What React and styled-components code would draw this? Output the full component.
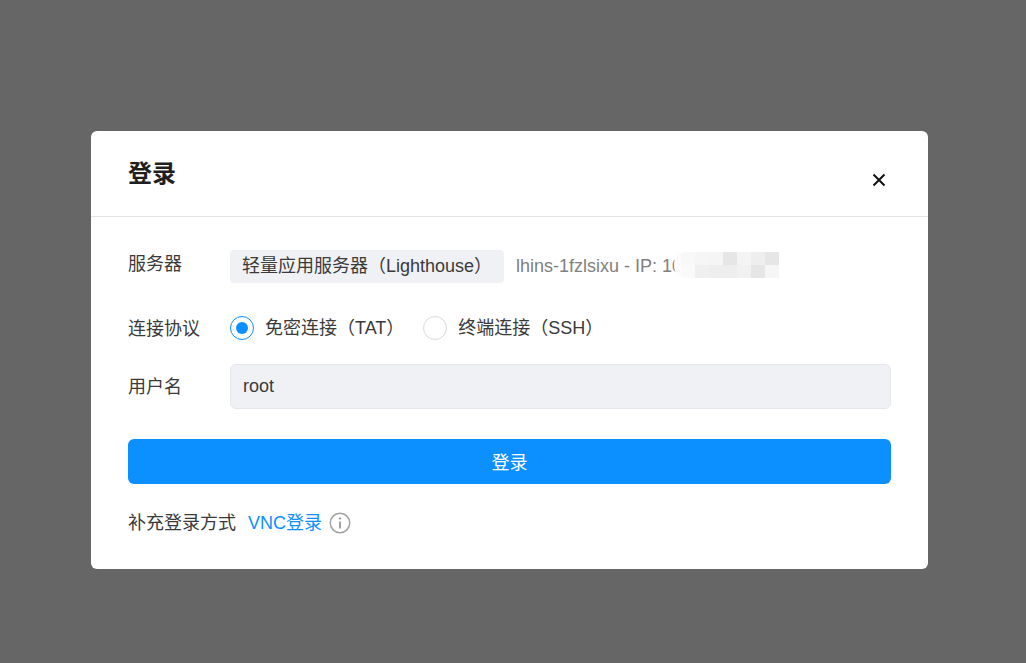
import React from 'react'
import styled, { createGlobalStyle } from 'styled-components'

const GlobalStyle = createGlobalStyle`
	html, body {
		margin: 0;
		padding: 0;
		height: 100%;
		background: #666666;
	}
	* {
		box-sizing: border-box;
	}
`

const Overlay = styled.div`
	width: 1026px;
	height: 663px;
	padding: 131px 0 0 91px;
	background: #666666;
	overflow: hidden;
	font-family: 'Liberation Sans', 'Noto Sans CJK SC', sans-serif;
`

const Modal = styled.div`
	width: 837px;
	height: 438px;
	background: #fff;
	border-radius: 6px;
`

const Header = styled.div`
	display: flex;
	justify-content: space-between;
	height: 86px;
	padding: 26px 41px 0 37px;
	border-bottom: 1px solid #e3e3e6;
`

const Title = styled.h1`
	margin: 0;
	font-size: 24px;
	line-height: 34px;
	font-weight: 700;
	color: #1f1f1f;
`

const CloseIcon = styled.svg`
	width: 16px;
	height: 16px;
	margin-top: 15px;
`

const Body = styled.div`
	padding: 33px 37px 0 37px;
`

const Row = styled.div`
	display: flex;
	align-items: center;
	margin-bottom: ${props => props.$gap || 0}px;
	height: ${props => props.$height}px;
`

const Label = styled.div`
	flex: 0 0 102px;
	font-size: 18px;
	line-height: 26px;
	color: #3a3a3a;
	transform: translateY(${props => props.$shift || 0}px);
`

const Chip = styled.div`
	height: 33px;
	width: 274px;
	padding-left: 12px;
	background: #f0f1f5;
	border-radius: 4px;
	font-size: 18px;
	line-height: 33px;
	color: #3a3a3a;
	white-space: nowrap;
`

const ServerId = styled.div`
	position: relative;
	margin-left: 12px;
	font-size: 18px;
	line-height: 33px;
	height: 33px;
	color: #808080;
	white-space: nowrap;
`

const Mosaic = styled.div`
	position: absolute;
	left: 158px;
	top: 2px;
	display: grid;
	grid-template-columns: 7px repeat(7, 14px);
	grid-auto-rows: 13px;
	border-radius: 12px 0 0 12px;
	overflow: hidden;
`

const Tile = styled.div`
	background: ${props => props.$c};
`

const RadioGroup = styled.div`
	display: flex;
	align-items: center;
`

const RadioItem = styled.div`
	display: flex;
	align-items: center;
	gap: 11px;
	margin-right: 19px;
	font-size: 18px;
	line-height: 26px;
	color: #3a3a3a;
	white-space: nowrap;
`

const Radio = styled.span`
	display: flex;
	align-items: center;
	justify-content: center;
	width: 24px;
	height: 24px;
	border-radius: 50%;
	border: 1px solid ${props => (props.$checked ? '#0c8fff' : '#d9dae2')};
	background: #fff;
	&::after {
		content: '';
		display: ${props => (props.$checked ? 'block' : 'none')};
		width: 12px;
		height: 12px;
		border-radius: 50%;
		background: #0c8fff;
	}
`

const TextBox = styled.div`
	flex: 1;
	height: 45px;
	padding-left: 12px;
	background: #f0f1f5;
	border: 1px solid #e6e7ec;
	border-radius: 6px;
	font-size: 18px;
	line-height: 42px;
	color: #3a3a3a;
`

const Submit = styled.button`
	display: block;
	width: 100%;
	height: 45px;
	margin-top: 30px;
	padding: 0 0 2px;
	background: #0c8fff;
	border: none;
	border-radius: 6px;
	color: #fff;
	font-family: inherit;
	font-size: 18px;
`

const Footer = styled.div`
	display: flex;
	align-items: center;
	height: 26px;
	margin-top: 26px;
	font-size: 18px;
	line-height: 26px;
	color: #3a3a3a;
`

const Link = styled.a`
	margin-left: 12px;
	color: #0c8fff;
`

const InfoIcon = styled.svg`
	width: 22px;
	height: 22px;
	margin-left: 7px;
`

const mosaic = [
	'#fbfbfb', '#f8f8f8', '#f6f6f6', '#f5f5f5', '#e6e6e6', '#f4f4f4', '#eeeeee', '#e6e6e6',
	'#fdfdfd', '#fafafa', '#f0f0f0', '#eeeeee', '#eeeeee', '#f1f1f1', '#e6e6e6', '#f6f6f6',
]

export default function App() {
	return (
		<Overlay>
			<GlobalStyle />
			<Modal>
				<Header>
					<Title>登录</Title>
					<CloseIcon viewBox="0 0 16 16">
						<path d="M2.5 2.5 13.5 13.5M13.5 2.5 2.5 13.5" stroke="#111" strokeWidth="2" fill="none" />
					</CloseIcon>
				</Header>
				<Body>
					<Row $height={33} $gap={33}>
						<Label $shift={-3}>服务器</Label>
						<Chip>轻量应用服务器（Lighthouse）</Chip>
						<ServerId>
							lhins-1fzlsixu - IP: 10
							<Mosaic>
								{mosaic.map((c, i) => (
									<Tile key={i} $c={c} />
								))}
							</Mosaic>
						</ServerId>
					</Row>
					<Row $height={24} $gap={24}>
						<Label $shift={1}>连接协议</Label>
						<RadioGroup>
							<RadioItem>
								<Radio $checked />
								免密连接（TAT）
							</RadioItem>
							<RadioItem>
								<Radio />
								终端连接（SSH）
							</RadioItem>
						</RadioGroup>
					</Row>
					<Row $height={45}>
						<Label>用户名</Label>
						<TextBox>root</TextBox>
					</Row>
					<Submit>登录</Submit>
					<Footer>
						补充登录方式
						<Link>VNC登录</Link>
						<InfoIcon viewBox="0 0 22 22">
							<circle cx="11" cy="11" r="9.75" stroke="#a3a3a3" strokeWidth="1.5" fill="none" />
							<path d="M11 9.5V16.5" stroke="#8c8c8c" strokeWidth="1.6" />
							<circle cx="11" cy="6.5" r="1.1" fill="#8c8c8c" />
						</InfoIcon>
					</Footer>
				</Body>
			</Modal>
		</Overlay>
	)
}
